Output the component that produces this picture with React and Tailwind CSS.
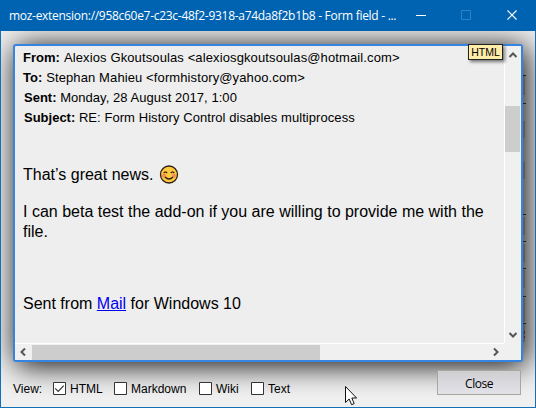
const headers = [
  { label: 'From:', value: 'Alexios Gkoutsoulas <alexiosgkoutsoulas@hotmail.com>', indent: 'pl-[23px]', text: 'ml-[0.5px] tracking-[0.115px]' },
  { label: 'To:', value: 'Stephan Mahieu <formhistory@yahoo.com>', indent: 'pl-[23px]', text: 'ml-[0.3px] tracking-[0.11px]' },
  { label: 'Sent:', value: 'Monday, 28 August 2017, 1:00', indent: 'pl-[24px]', text: 'tracking-[0.05px]' },
  { label: 'Subject:', value: 'RE: Form History Control disables multiprocess', indent: 'pl-[24px]', text: 'tracking-[0.06px]' },
];

function TitleBar() {
  return (
    <header className="flex h-[31px] shrink-0 items-center bg-[#0063b1] text-white">
      <h1 className="w-[408px] shrink-0 whitespace-pre pl-[9px] font-['Open_Sans',sans-serif] text-[12px] leading-[31px] tracking-[-0.29px]">
        moz-extension://958c60e7-c23c-48f2-9318-a74da8f2b1b8 - Form field - ...
      </h1>
      <svg className="h-[31px] w-[128px] shrink-0" viewBox="408 0 128 31" fill="none" stroke="white">
        <path d="M416 15.5h10" />
        <path d="M461.5 10.5h9v9h-9z" stroke="#2e82c6" />
        <path d="M507.5 10.5l9 9M516.5 10.5l-9 9" strokeWidth="1.2" />
      </svg>
    </header>
  );
}

function Chevron({ d, className }) {
  return (
    <svg className={className} viewBox="0 0 16 16" fill="none" stroke="#555" strokeWidth="2">
      <path d={d} />
    </svg>
  );
}

function Message() {
  return (
    <article className="w-[489px] shrink-0 overflow-hidden whitespace-nowrap font-['Liberation_Sans',Arial,sans-serif] text-black">
      <div className="-ml-[15px] pt-[2px] text-[13px] leading-[20px]">
        {headers.map((h) => (
          <p key={h.label} className={h.indent}>
            <b>{h.label}</b> <span className={h.text}>{h.value}</span>
          </p>
        ))}
      </div>
      <div className="pl-[8px] text-[16px] leading-[20px]">
        <p className="mt-[37px] flex items-center">
          That’s great news.
          <svg className="ml-[6px] size-[20px]" viewBox="0 0 20 20" fill="none">
            <circle cx="10" cy="9.5" r="8.5" fill="#ffc83d" stroke="#2c2118" strokeWidth="1.3" />
            <circle cx="5" cy="10.7" r="2" fill="#f58b5c" />
            <circle cx="15" cy="10.7" r="2" fill="#f58b5c" />
            <path d="M4.7 8.1q1.7-2.6 3.5 0M11.8 8.1q1.7-2.6 3.5 0M6 12q4 4 8 0" stroke="#2c2118" strokeWidth="1.2" />
          </svg>
        </p>
        <p className="mt-[17px]">
          I can beta test the add-on if you are willing to provide me with the
          <br />
          file.
        </p>
        <p className="mt-[52px]">
          Sent from <a className="text-[#0000ee] underline">Mail</a> for Windows 10
        </p>
      </div>
    </article>
  );
}

function Check({ label, checked, className }) {
  return (
    <label className={`flex items-center gap-[4px] ${className}`}>
      <svg className="size-[13px] shrink-0" viewBox="0 0 13 13" fill="none">
        <path d="M.5.5h12v12H.5z" fill="white" stroke="#333" />
        {checked && <path d="M2.2 6.3l3 3 5.5-5.6" stroke="#333" strokeWidth="1.2" />}
      </svg>
      <span className="pt-[2px]">{label}</span>
    </label>
  );
}

export default function App() {
  return (
    <div className="relative flex h-[408px] w-[536px] flex-col overflow-hidden bg-[#f0f0f0]">
      <TitleBar />
      <div className="flex min-h-0 flex-1 flex-col overflow-hidden border border-t-0 border-[#1270b8]">
        <div className="relative mt-[13px] ml-[12px] flex h-[318px] w-[510px] shrink-0 flex-col rounded-[3px] border-2 border-[#3584df] bg-[#eee] shadow-[3px_3px_30px_#000]">
          <div className="flex h-[297px]">
            <Message />
            <div className="flex w-[17px] flex-col border-l border-white bg-[#f0f0f0]">
              <Chevron className="mt-[1px] h-[16px] w-[16px]" d="M4.5 10L8 6.5l3.5 3.5" />
              <div className="mt-[43px] h-[46px] w-[15px] bg-[#cdcdcd]" />
              <Chevron className="mt-auto h-[16px] w-[16px]" d="M4.5 6L8 9.5 11.5 6" />
            </div>
          </div>
          <div className="flex h-[17px] items-center bg-[#f0f0f0]">
            <div className="flex h-[17px] w-[489px] items-center border-t border-white">
              <Chevron className="size-[16px]" d="M10 4.5L6.5 8l3.5 3.5" />
              <div className="ml-px h-[15px] w-[288px] bg-[#cdcdcd]" />
              <Chevron className="ml-auto size-[16px]" d="M6 4.5L9.5 8 6 11.5" />
            </div>
          </div>
          <span className="absolute -top-[2px] left-[453px] flex h-[16px] w-[35px] items-center justify-center border border-[#222] bg-[#ffeca8] font-['Liberation_Sans',sans-serif] text-[10.5px] leading-none text-black shadow-[2px_2px_3px_rgba(0,0,0,0.5)]">
            HTML
          </span>
          <svg className="absolute -top-[2px] left-[506px] h-[318px] w-[8px]" viewBox="521 44 8 318">
            <path d="M523 76h2v19h-2zM523 121h2v17h-2zM523 162h2v17h-2zM523 217h2v18h-2zM523 244h2v18h-2zM523 270h2v18h-2zM523 298h2v24h-2zM523 324h2v18h-2z" fill="#5d5a57" />
            <path d="M523 75.5h3M523 103.5h3M523 214.5h3M523 241.5h3M523 268.5h3M523 296.5h3M523 323.5h3" stroke="#222" />
            <path d="M524.5 331v3M524.5 336v2" stroke="#54251d" />
          </svg>
        </div>
        <footer className="relative flex h-[45px] shrink-0 items-start pl-[12px] font-['Liberation_Sans',Arial,sans-serif] text-[12px] leading-[16px] text-black">
          <div className="mt-[17px] flex w-[424px] items-center whitespace-nowrap">
            <span className="w-[40px] pt-[2px]">View:</span>
            <Check label="HTML" checked className="w-[61px]" />
            <Check label="Markdown" className="w-[85px]" />
            <Check label="Wiki" className="w-[52px]" />
            <Check label="Text" className="w-[50px]" />
          </div>
          <button className="mt-[8px] h-[25px] w-[84px] border border-[#aaa69e] bg-linear-to-b from-[#cfcfd2] to-[#e2e2e9] pt-[2px] font-['Open_Sans',sans-serif] text-[12px] tracking-[-0.5px]">
            Close
          </button>
        </footer>
      </div>
      <svg className="absolute left-[344px] top-[385px] h-[21px] w-[14px]" viewBox="0 0 14 21">
        <path d="M1.5 1.5v16l3.7-3.5 2.4 5.7 2.6-1.1-2.4-5.6h4.8z" fill="white" stroke="#111" />
      </svg>
    </div>
  );
}
